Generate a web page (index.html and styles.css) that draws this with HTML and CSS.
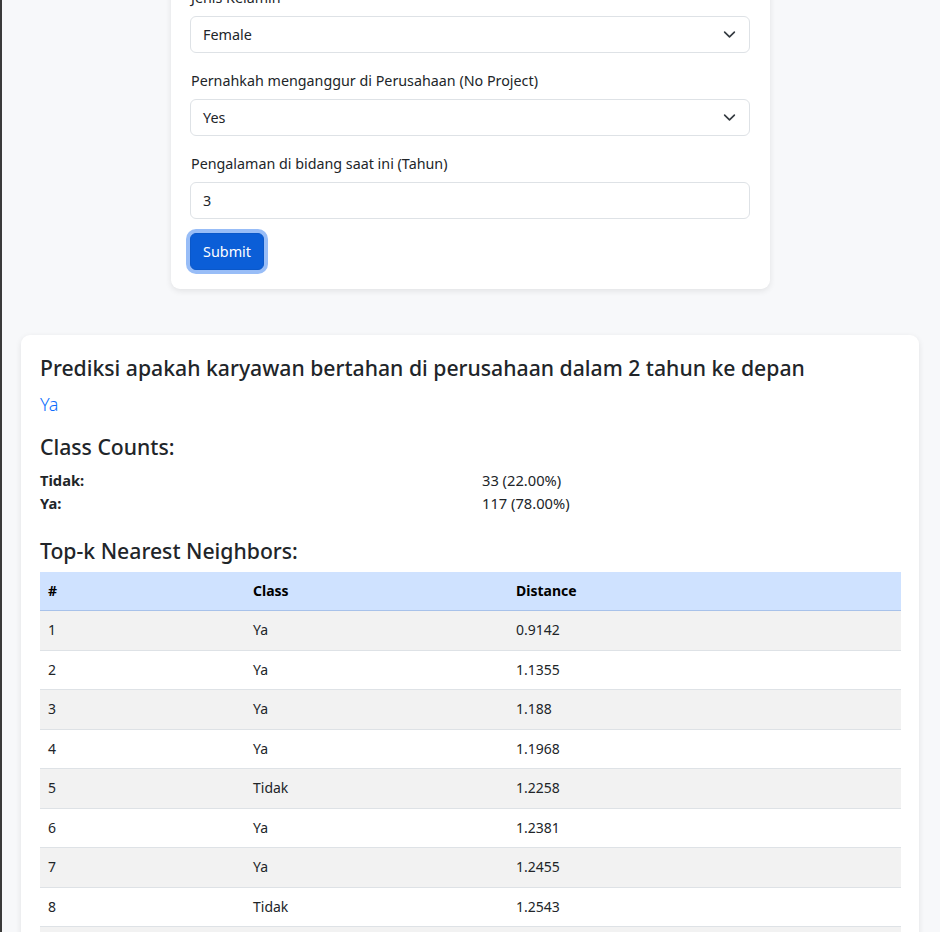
FILE: index.html
```html
<!DOCTYPE html>
<html lang="id">
<head>
<meta charset="utf-8">
<title>Prediksi Karyawan</title>
<link rel="stylesheet" href="styles.css">
</head>
<body>
<div class="page">
  <div class="form-wrap">
    <form class="card form-card">
      <div class="group">
        <label class="label">Jenis Kelamin</label>
        <div class="select">Female<svg class="chev" viewBox="0 0 16 16" width="16" height="16"><path d="M2 5l6 6 6-6" fill="none" stroke="#343a40" stroke-width="2" stroke-linecap="round" stroke-linejoin="round"/></svg></div>
      </div>
      <div class="group">
        <label class="label">Pernahkah menganggur di Perusahaan (No Project)</label>
        <div class="select">Yes<svg class="chev" viewBox="0 0 16 16" width="16" height="16"><path d="M2 5l6 6 6-6" fill="none" stroke="#343a40" stroke-width="2" stroke-linecap="round" stroke-linejoin="round"/></svg></div>
      </div>
      <div class="group">
        <label class="label">Pengalaman di bidang saat ini (Tahun)</label>
        <div class="input">3</div>
      </div>
      <div class="btn-row"><button type="button" class="btn">Submit</button></div>
    </form>
  </div>

  <div class="card result-card">
    <h4 class="title">Prediksi apakah karyawan bertahan di perusahaan dalam 2 tahun ke depan</h4>
    <p class="lead">Ya</p>
    <h4 class="title sub">Class Counts:</h4>
    <div class="counts">
      <div class="count-row"><span class="k">Tidak:</span><span class="v">33 (22.00%)</span></div>
      <div class="count-row"><span class="k">Ya:</span><span class="v">117 (78.00%)</span></div>
    </div>
    <h4 class="title sub2">Top-k Nearest Neighbors:</h4>
    <table class="table">
      <thead>
        <tr><th class="c1">#</th><th class="c2">Class</th><th>Distance</th></tr>
      </thead>
      <tbody>
        <tr><td>1</td><td>Ya</td><td>0.9142</td></tr>
        <tr><td>2</td><td>Ya</td><td>1.1355</td></tr>
        <tr><td>3</td><td>Ya</td><td>1.188</td></tr>
        <tr><td>4</td><td>Ya</td><td>1.1968</td></tr>
        <tr><td>5</td><td>Tidak</td><td>1.2258</td></tr>
        <tr><td>6</td><td>Ya</td><td>1.2381</td></tr>
        <tr><td>7</td><td>Ya</td><td>1.2455</td></tr>
        <tr><td>8</td><td>Tidak</td><td>1.2543</td></tr>
        <tr><td>9</td><td>Ya</td><td>1.2601</td></tr>
        <tr><td>10</td><td>Ya</td><td>1.2734</td></tr>
      </tbody>
    </table>
  </div>
</div>
</body>
</html>
```
FILE: styles.css
```css
* { box-sizing: border-box; }
html, body { margin: 0; padding: 0; }
body {
  background: #f7f8fa;
  font-family: "Noto Sans", "Open Sans", sans-serif;
  color: #212529;
  border-left: 2px solid #3a3a3a;
  height: 932px;
  overflow: hidden;
}
.page {
  padding: 0 19px 0 19px;
}
.form-wrap {
  display: flex;
  justify-content: center;
  margin-top: -34px;
}
.card {
  background: #fff;
  border-radius: 9px;
  box-shadow: 0 2px 6px rgba(0,0,0,0.09);
}
.form-card {
  width: 599px;
  padding: 20px 20px 19px 19px;
  margin-left: -1px;
}
.group { margin-bottom: 16px; }
.label {
  display: block;
  font-size: 14.3px;
  line-height: 24px;
  margin-bottom: 6px;
  padding-left: 1px;
}
.select, .input {
  height: 37px;
  border: 1px solid #dee2e6;
  border-radius: 6px;
  padding: 0 12px;
  font-size: 14.4px;
  display: flex;
  align-items: center;
  justify-content: space-between;
}
.chev { margin-right: 1px; width: 13px; height: 13px; }
.btn-row { display: flex; }
.btn {
  font-family: inherit;
  font-size: 14.4px;
  color: #fff;
  background: #0b5ed7;
  border: 1px solid #0a58ca;
  border-radius: 6px;
  height: 37px;
  padding: 0 12px;
  box-shadow: 0 0 0 4px #98bdf7;
  margin-top: -2px;
}
.result-card {
  margin-top: 46px;
  padding: 19px 19px 20px;
  width: 898px;
}
.title {
  margin: 0 0 8px;
  font-size: 21.2px;
  font-weight: 500;
  line-height: 28px;
}
.lead {
  margin: 0 0 15px;
  font-size: 18px;
  line-height: 28px;
  color: #0d6efd;
  font-weight: 300;
}
.sub { margin-bottom: 8px; }
.counts { margin-bottom: 22px; font-size: 14.7px; }
.count-row {
  display: grid;
  grid-template-columns: 442px 1fr;
  line-height: 23px;
}
.k { font-weight: 700; }
.sub2 { margin-bottom: 7px; }
.table {
  width: 861px;
  border-collapse: collapse;
  font-size: 14px;
}
.table th, .table td {
  text-align: left;
  padding: 8px 8px;
  line-height: 22.45px;
  border-bottom: 1px solid #dee2e6;
}
.table thead th {
  background: #cfe2ff;
  font-weight: 700;
  color: #000;
  border-bottom: 1px solid #a8c2ea;
  height: 38px;
}
.table tbody tr:nth-child(odd) td { background: #f2f2f2; }
.c1 { width: 205px; }
.c2 { width: 263px; }
```
